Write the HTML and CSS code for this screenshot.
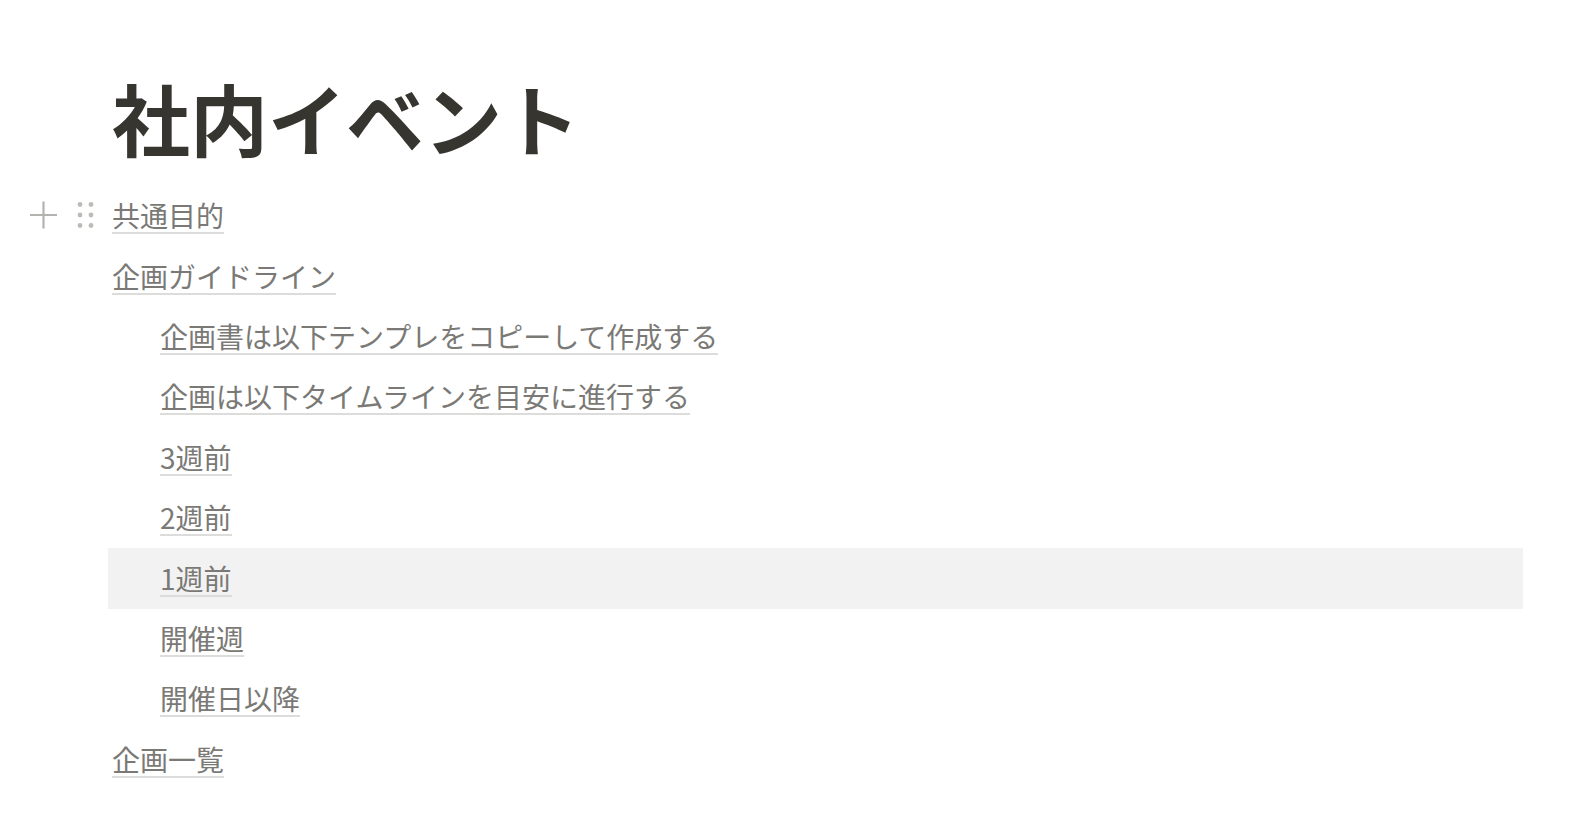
FILE: index.html
```html
<!DOCTYPE html>
<html lang="ja">

<head>
	<meta charset="UTF-8">
	<meta name="viewport" content="width=device-width, initial-scale=1.0">
	<title>社内イベント</title>
	<link rel="stylesheet" href="styles.css">
</head>

<body>
	<div class="page">
		<h1 class="title">社内イベント</h1>

		<div class="blocks">
			<div class="block">
				<!-- ホバー時のハンドル -->
				<div class="handle">
					<svg class="handle-plus" width="31" height="31" viewBox="0 0 31 31">
						<path d="M15.5 2 V29 M2 15.5 H29" stroke="#b3b2af" stroke-width="2.2" fill="none" />
					</svg>
					<svg class="handle-drag" width="19" height="29" viewBox="0 0 19 29">
						<circle cx="4" cy="4" r="2.4" fill="#bcbbb8" />
						<circle cx="15" cy="4" r="2.4" fill="#bcbbb8" />
						<circle cx="4" cy="14.5" r="2.4" fill="#bcbbb8" />
						<circle cx="15" cy="14.5" r="2.4" fill="#bcbbb8" />
						<circle cx="4" cy="25" r="2.4" fill="#bcbbb8" />
						<circle cx="15" cy="25" r="2.4" fill="#bcbbb8" />
					</svg>
				</div>
				<a class="page-link" href="#">共通目的</a>
			</div>
			<div class="block">
				<a class="page-link" href="#">企画ガイドライン</a>
			</div>
			<div class="block sub">
				<a class="page-link" href="#">企画書は以下テンプレをコピーして作成する</a>
			</div>
			<div class="block sub">
				<a class="page-link" href="#">企画は以下タイムラインを目安に進行する</a>
			</div>
			<div class="block sub">
				<a class="page-link" href="#">3週前</a>
			</div>
			<div class="block sub">
				<a class="page-link" href="#">2週前</a>
			</div>
			<div class="block sub active">
				<a class="page-link" href="#">1週前</a>
			</div>
			<div class="block sub">
				<a class="page-link" href="#">開催週</a>
			</div>
			<div class="block sub">
				<a class="page-link" href="#">開催日以降</a>
			</div>
			<div class="block">
				<a class="page-link" href="#">企画一覧</a>
			</div>
		</div>
	</div>
</body>

</html>
```

FILE: styles.css
```css
* {
	margin: 0;
	padding: 0;
	box-sizing: border-box;
}

body {
	background: #fff;
	font-family: "Noto Sans CJK JP", "Noto Sans", sans-serif;
	color: #37352f;
}

.page {
	padding: 70px 67px 0 108px;
}

.title {
	padding-left: 4px;
	font-size: 78px;
	font-weight: 700;
	line-height: 94px;
	color: #37352f;
}

.blocks {
	display: flex;
	flex-direction: column;
	margin-top: 22px;
}

.block {
	position: relative;
	display: flex;
	align-items: center;
	height: 60.4px;
	padding-left: 4px;
}

.block.sub {
	padding-left: 52px;
}

.block.active {
	background: #f2f2f2;
}

.page-link {
	font-size: 28px;
	line-height: 34px;
	color: #7a7976;
	text-decoration: none;
	border-bottom: 2px solid #dcdcda;
}

.handle {
	position: absolute;
	left: -80px;
	top: 50%;
	transform: translateY(-50%);
	display: flex;
	align-items: center;
	gap: 17px;
	margin-top: -1.5px;
}

.handle svg {
	display: block;
}
```
